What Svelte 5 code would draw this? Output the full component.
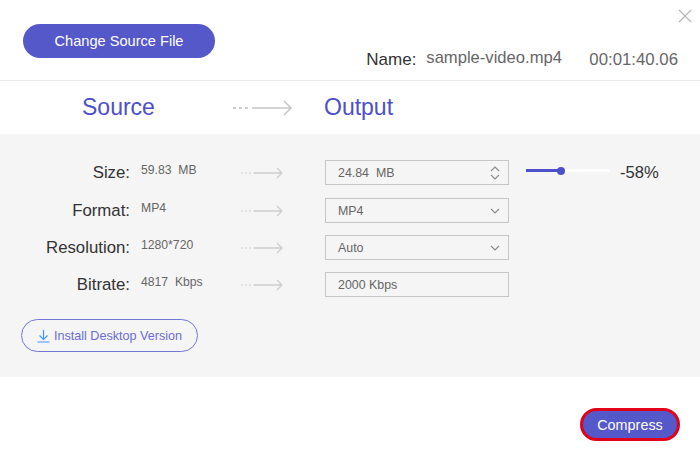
<script lang="ts">
    const rows = [
        { label: "Size", value: "59.83  MB", output: "24.84  MB", kind: "stepper" },
        { label: "Format", value: "MP4", output: "MP4", kind: "select" },
        { label: "Resolution", value: "1280*720", output: "Auto", kind: "select" },
        { label: "Bitrate", value: "4817  Kbps", output: "2000 Kbps", kind: "plain" }
    ]
</script>

<div class="dialog">
    <button class="close" aria-label="Close">
        <svg width="14" height="14" viewBox="0 0 14 14"><path d="M1 1L13 13M13 1L1 13" stroke="#b4b4b4" stroke-width="1.1" fill="none"/></svg>
    </button>

    <header class="top">
        <button class="change">Change Source File</button>
        <div class="meta">
            <span class="name-label">Name:</span>
            <span class="name">sample-video.mp4</span>
            <span class="time">00:01:40.06</span>
        </div>
    </header>

    <div class="titles">
        <h2 class="source">Source</h2>
        <svg class="big-arrow" width="60" height="18" viewBox="0 0 60 18">
            <path d="M0 9H3M6 9H9M12 9H15" stroke="#bdbdbd" stroke-width="1.4" fill="none"/>
            <path d="M19 9H58M51 2L58 9L51 16" stroke="#c8c8c8" stroke-width="1.6" fill="none"/>
        </svg>
        <h2 class="output">Output</h2>
    </div>

    <section class="panel">
        {#each rows as row}
            <div class="row">
                <span class="label">{row.label}:</span>
                <span class="value">{row.value}</span>
                <svg class="arrow" width="42" height="12" viewBox="0 0 42 12">
                    <path d="M0 6H2M4 6H6M8 6H10" stroke="#cfcfcf" stroke-width="1.1" fill="none"/>
                    <path d="M12.500 6H41M36 1L41 6L36 11" stroke="#cdcdcd" stroke-width="1.3" fill="none"/>
                </svg>
                <div class="field">
                    <span>{row.output}</span>
                    {#if row.kind === "stepper"}
                        <svg width="10" height="14" viewBox="0 0 10 14"><path d="M1 5L5 1L9 5M1 9L5 13L9 9" stroke="#8a8a8a" stroke-width="1.1" fill="none"/></svg>
                    {:else if row.kind === "select"}
                        <svg width="10" height="6" viewBox="0 0 10 6"><path d="M1 1L5 5L9 1" stroke="#8a8a8a" stroke-width="1.1" fill="none"/></svg>
                    {/if}
                </div>
                {#if row.kind === "stepper"}
                    <div class="slider"><div class="fill"></div><div class="knob"></div></div>
                    <span class="percent">-58%</span>
                {/if}
            </div>
        {/each}

        <button class="install">
            <svg width="13" height="14" viewBox="0 0 13 14"><path d="M6.500 1V10M2.500 6.500L6.500 10.500L10.500 6.500M0.500 13H12.500" stroke="#3f9bf5" stroke-width="1.2" fill="none"/></svg>
            Install Desktop Version
        </button>
    </section>

    <footer class="bottom">
        <button class="compress">Compress</button>
    </footer>
</div>

<style>
    :global(body) {
        background: #fff;
    }

    .dialog {
        position: relative;
        width: 700px;
        height: 458px;
        overflow: hidden;
        background: #fff;
        font-family: "Liberation Sans", Arial, sans-serif;
    }

    button {
        font-family: inherit;
        cursor: pointer;
    }

    .close {
        position: absolute;
        top: 9px;
        right: 8px;
        padding: 0;
        border: 0;
        background: none;
        display: flex;
    }

    .top {
        height: 81px;
        box-sizing: border-box;
        padding: 24px 22px 0 23px;
        display: flex;
        justify-content: space-between;
        border-bottom: 1px solid #ececec;
    }

    .change {
        width: 192px;
        height: 34px;
        border: 0;
        border-radius: 17px;
        background: #5558c8;
        color: #fff;
        font-size: 14.6px;
        padding: 0;
    }

    .meta {
        margin-top: 23px;
        display: flex;
        align-items: flex-start;
        height: 24px;
    }

    .name-label {
        width: 49px;
        font-size: 17px;
        color: #333;
        margin-top: 3px;
    }

    .name {
        font-size: 16.6px;
        color: #666;
        margin-left: 11px;
        width: 163px;
        margin-top: 1px;
    }

    .time {
        font-size: 16.8px;
        color: #666;
        margin-top: 3px;
    }

    .titles {
        height: 53px;
        display: flex;
        align-items: center;
    }

    .titles h2 {
        margin: 0;
        font-size: 23px;
        font-weight: 400;
        color: #4d50c8;
    }

    .source {
        margin-left: 82px !important;
        width: 151px;
    }

    .big-arrow {
        width: 60px;
        margin-right: 31px;
    }

    .panel {
        height: 243px;
        box-sizing: border-box;
        padding-top: 26px;
        background: #f5f5f5;
    }

    .row {
        height: 37px;
        display: flex;
        align-items: flex-start;
    }

    .row:first-child {
        height: 38px;
    }

    .label {
        width: 130px;
        text-align: right;
        font-size: 16.8px;
        line-height: 25px;
        color: #333;
    }

    .value {
        width: 100px;
        margin-left: 11px;
        white-space: pre;
        font-size: 12.2px;
        line-height: 20px;
        color: #666;
    }

    .arrow {
        margin-top: 7px;
        margin-right: 42px;
    }

    .field {
        width: 184px;
        height: 25px;
        box-sizing: border-box;
        padding: 0 8px 0 12px;
        display: flex;
        align-items: center;
        justify-content: space-between;
        border: 1px solid #c6c6c6;
        white-space: pre;
        font-size: 12.4px;
        color: #666;
    }

    .slider {
        position: relative;
        width: 84px;
        height: 3px;
        margin: 9px 0 0 17px;
        background: #fff;
    }

    .fill {
        width: 36px;
        height: 3px;
        background: #4d50c8;
    }

    .knob {
        position: absolute;
        left: 31px;
        top: -2.500px;
        width: 8px;
        height: 8px;
        border-radius: 50%;
        background: #4d50c8;
    }

    .percent {
        margin-left: 10px;
        font-size: 16.600px;
        line-height: 25px;
        color: #333;
    }

    .install {
        margin: 10px 0 0 21px;
        width: 177px;
        height: 33px;
        padding: 0;
        display: flex;
        align-items: center;
        justify-content: center;
        gap: 4px;
        border: 1px solid #7376d6;
        border-radius: 17px;
        background: transparent;
        color: #6a6dd6;
        font-size: 12.600px;
    }

    .bottom {
        display: flex;
        justify-content: flex-end;
        padding: 31px 20px 0 0;
    }

    .compress {
        width: 100px;
        height: 33px;
        border: 3px solid #e3001b;
        border-radius: 17px;
        background: #5558c8;
        color: #fff;
        font-size: 14.400px;
        padding: 0;
    }
</style>
